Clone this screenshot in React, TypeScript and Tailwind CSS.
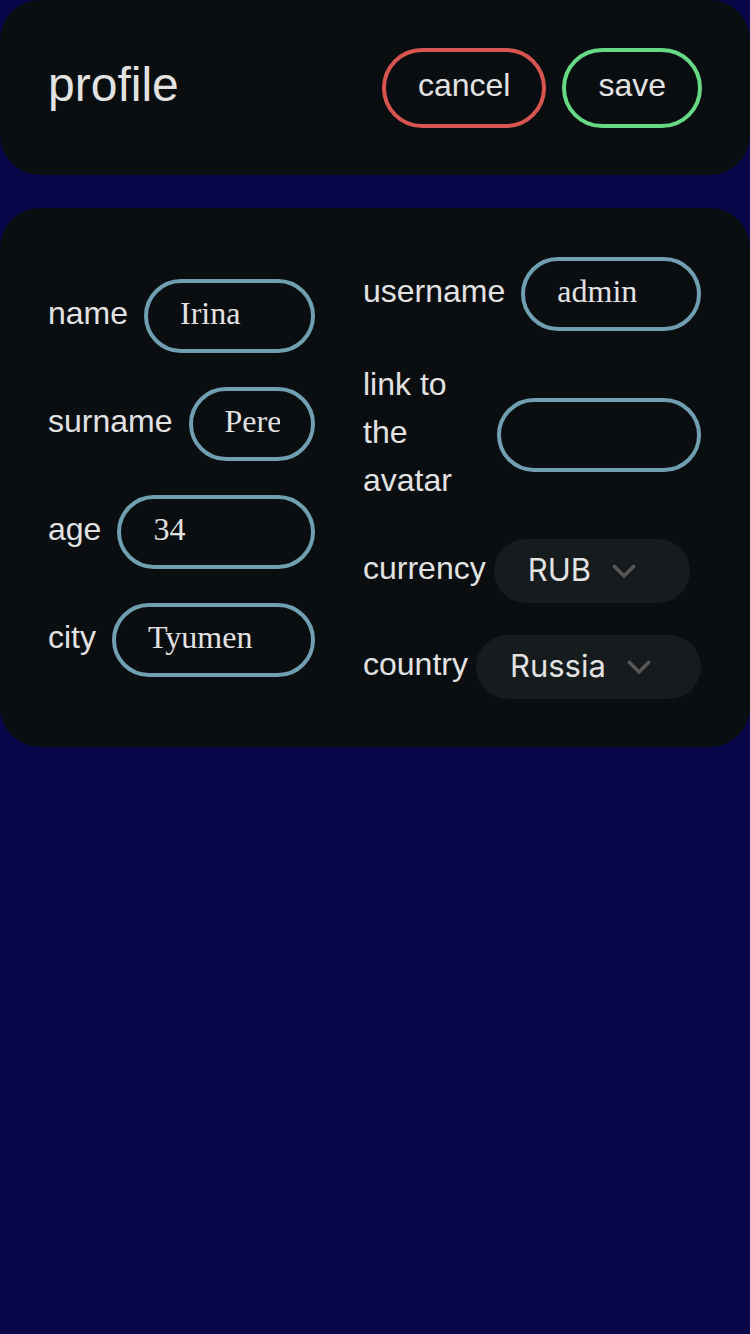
import type { ReactNode } from "react";

const sans = "font-['Liberation_Sans',Arial,sans-serif]";

function Field({
  label,
  value,
  labelClass = "",
}: {
  label: ReactNode;
  value: string;
  labelClass?: string;
}) {
  return (
    <div className="flex items-center gap-4">
      <span className={`shrink-0 -translate-y-[3px] text-[32px] leading-[48px] text-[#e2e2e2] ${labelClass}`}>{label}</span>
      <input
        readOnly
        defaultValue={value}
        className="h-[74px] w-0 min-w-0 flex-1 rounded-full border-4 border-[#6f9fb1] bg-transparent pb-[5px] pl-[32px] pr-[31px] font-['Liberation_Serif','Times_New_Roman',serif] text-[32px] text-[#e2e2e2] outline-none"
      />
    </div>
  );
}

function Select({ label, value, width }: { label: string; value: string; width: string }) {
  return (
    <div className="flex items-center gap-2">
      <span className="shrink-0 -translate-y-[3px] text-[32px] leading-[48px] text-[#e2e2e2]">{label}</span>
      <div className={`flex h-[64px] shrink-0 items-center rounded-full bg-[#161b1e] pl-[34px] ${width}`}>
        <span className="-translate-y-[2px] font-['Inter',sans-serif] text-[31px] leading-none text-[#e2e2e2]">{value}</span>
        <svg width={24} height={15} viewBox="0 0 24 15" className="ml-[21px]" aria-hidden>
          <path
            d="M2.5 2.5 L12 12 L21.5 2.5"
            fill="none"
            stroke="#575757"
            strokeWidth={3.6}
            strokeLinecap="round"
            strokeLinejoin="round"
          />
        </svg>
      </div>
    </div>
  );
}

export default function App() {
  return (
    <div className={`min-h-[1334px] w-[750px] bg-[#08074a] ${sans}`}>
      <header className="flex h-[175px] items-center justify-between rounded-[40px] bg-[#0a0e11] px-12">
        <h1 className="-translate-y-[3px] text-[48px] font-normal leading-none text-[#e2e2e2]">profile</h1>
        <div className="flex gap-[16px]">
          <button className="h-[80px] rounded-full border-4 border-[#d95650] px-[32px] pb-[6px] text-[32px] leading-none text-[#e2e2e2]">
            cancel
          </button>
          <button className="h-[80px] rounded-full border-4 border-[#67d985] px-[32px] pb-[6px] text-[32px] leading-none text-[#e2e2e2]">
            save
          </button>
        </div>
      </header>

      <section className="mt-[33px] flex items-center justify-between rounded-[40px] bg-[#0a0e11] pb-12 pl-12 pr-[49px] pt-[49px]">
        <div className="flex w-[267px] flex-col gap-[34px]">
          <Field label="name" value="Irina" />
          <Field label="surname" value="Perevalova" />
          <Field label="age" value="34" />
          <Field label="city" value="Tyumen" />
        </div>

        <div className="flex w-[338px] flex-col gap-8">
          <Field label="username" value="admin" />
          <Field label="link to the avatar" value="" labelClass="w-[118px]" />
          <Select label="currency" value="RUB" width="w-[196px]" />
          <Select label="country" value="Russia" width="w-[225px]" />
        </div>
      </section>
    </div>
  );
}
